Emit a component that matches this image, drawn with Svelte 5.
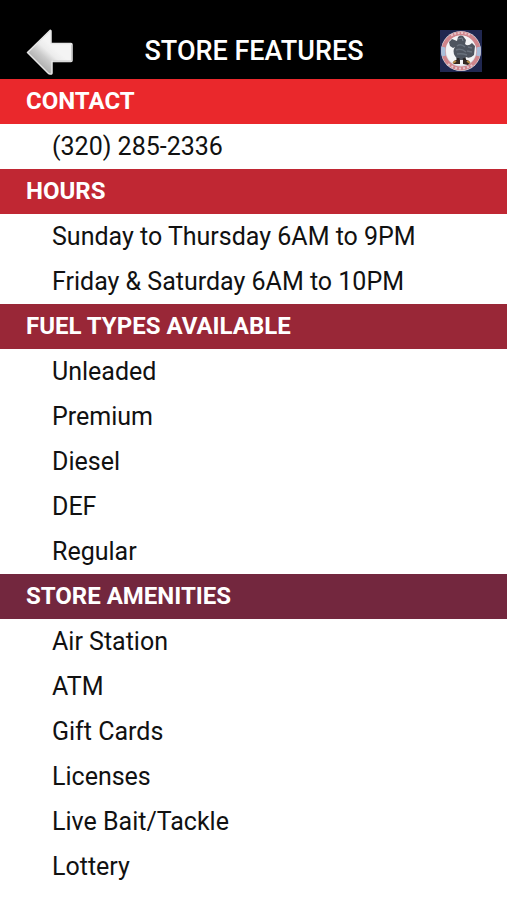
<script>
  export let title = "STORE FEATURES";

  const phone = "(320) 285-2336";

  const sections = [
    { name: "HOURS", color: "#c02733", items: ["Sunday to Thursday 6AM to 9PM", "Friday & Saturday 6AM to 10PM"] },
    { name: "FUEL TYPES AVAILABLE", color: "#992737", items: ["Unleaded", "Premium", "Diesel", "DEF", "Regular"] },
    {
      name: "STORE AMENITIES",
      color: "#73273e",
      items: ["Air Station", "ATM", "Gift Cards", "Licenses", "Live Bait/Tackle", "Lottery"]
    }
  ];

  function goBack() {
    history.back();
  }
</script>

<header>
  <button class="back" aria-label="Back" on:click={goBack}>
    <svg viewBox="0 0 48 48" width="48" height="48">
      <defs>
        <linearGradient id="metal" x1="0.2" y1="0.85" x2="0.6" y2="0.4">
          <stop offset="0" stop-color="#a2a2a2" />
          <stop offset="0.5" stop-color="#cccccc" />
          <stop offset="0.75" stop-color="#ececec" />
          <stop offset="1" stop-color="#f4f4f4" />
        </linearGradient>
      </defs>
      <path d="M1.500 25.500L24 3.500Q25 3 25 4.500V16.500H45Q46 16.500 46 17.500V33.500Q46 34.500 45 34.500H26V46Q26 47.500 24 47Q23 47 22 46Z" fill="url(#metal)" stroke="#e6e6e6" stroke-width="1.500" stroke-linejoin="round" />
      <path d="M27 34H45.500V18" fill="none" stroke="#cccccc" stroke-width="1" />
    </svg>
  </button>
  <h1>{title}</h1>
  <!-- store mascot badge -->
  <svg class="logo" viewBox="0 0 42 42" width="42" height="42" role="img" aria-label="Store logo">
    <rect width="42" height="42" fill="#202750" />
    <circle cx="21" cy="21" r="20" fill="#dcdfe7" />
    <circle cx="21" cy="21" r="17.500" fill="none" stroke="#cf848b" stroke-width="4" />
    <path d="M3.500 17A18 18 0 0 0 4 26M38.500 17A18 18 0 0 1 38 26" fill="none" stroke="#a9bedb" stroke-width="4" />
    <path d="M11 5.500Q21 0.500 31 5.500" fill="none" stroke="#e9c3c8" stroke-width="2" stroke-dasharray="2 1.500" />
    <path d="M8 34Q20 43 34 34" fill="none" stroke="#e4c6cc" stroke-width="2" stroke-dasharray="2 2" />
    <circle cx="21" cy="20.500" r="15" fill="#f4f4f6" />
    <path d="M18 7Q20 4.500 23 6L26 10L25 14Q28 17 32 13L35 16L34 25Q30 29 26 27L24 30H18L15 26Q12 21 15 17L13 18L10 16L9 12L12 9L17 11Z" fill="#4e545f" />
    <path d="M17 16Q21 13 25 17M16 20Q21 18 26 22M17 24Q22 23 27 25M28 17L32 18M27 21L32 22" fill="none" stroke="#69717d" stroke-width="1.500" />
    <path d="M18 9L22 8L23 11" fill="none" stroke="#7c8490" />
    <path d="M18 28V31M24 28L25 31" stroke="#272426" stroke-width="3" />
    <path d="M13 33Q14 29 20 30V34H14ZM23 30Q29 29 30 33L28 35L23 34Z" fill="#332822" />
    <path d="M13 33L16 31M27 31L30 33" stroke="#b48a43" stroke-width="2" />
  </svg>
</header>

<main>
  <section>
    <h2 style="background: #ea282c">CONTACT</h2>
    <ul>
      <li><a href="tel:+13202852336">{phone}</a></li>
    </ul>
  </section>
  {#each sections as section}
    <section>
      <h2 style="background: {section.color}">{section.name}</h2>
      <ul>
        {#each section.items as item}
          <li>{item}</li>
        {/each}
      </ul>
    </section>
  {/each}
</main>

<style>
:global(body) {
  margin: 0;
  background: #fff;
  font-family: Roboto, "Liberation Sans", sans-serif;
}

header {
  display: grid;
  grid-template-columns: 48px 1fr 48px;
  align-items: center;
  padding: 27px 25px 4px 26px;
  background: #000;
  color: #fff;
}

.back {
  display: flex;
  padding: 0;
  background: none;
  border: none;
  cursor: pointer;
}

.logo {
  justify-self: end;
}

h1 {
  margin: 0;
  font-size: 27px;
  font-weight: 500;
  line-height: 45px;
  text-align: center;
}

h2 {
  margin: 0;
  padding-left: 26px;
  color: #fff;
  font-size: 24px;
  font-weight: 700;
  line-height: 45px;
}

ul {
  margin: 0;
  padding: 0;
  list-style: none;
}

li {
  padding-left: 52px;
  color: #111;
  font-size: 25px;
  line-height: 45px;
}

/* phone number looks like the other rows */
a {
  color: inherit;
  text-decoration: none;
}
</style>
